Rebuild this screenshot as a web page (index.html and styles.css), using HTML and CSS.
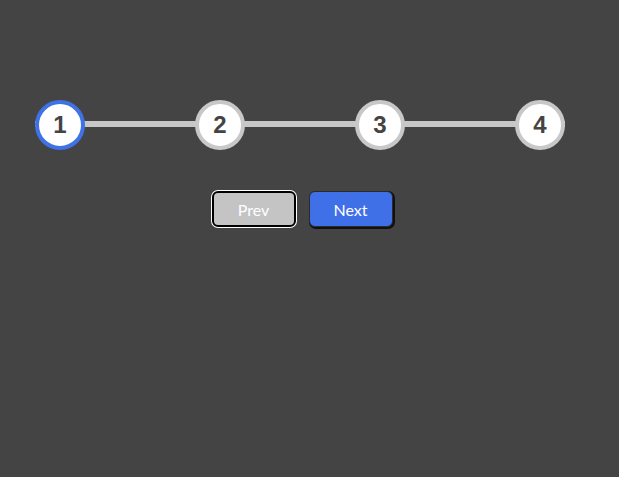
FILE: index.html
```html
<!DOCTYPE html>
<html lang="en">
<head>
  <meta charset="UTF-8">
  <title>Progress Steps</title>
  <link rel="stylesheet" href="styles.css">
</head>
<body>
  <div class="container">
    <div class="progress">
      <div class="circle active">1</div>
      <div class="circle">2</div>
      <div class="circle">3</div>
      <div class="circle">4</div>
    </div>
    <div class="buttons">
      <button class="btn btn-prev" disabled>Prev</button>
      <button class="btn btn-next">Next</button>
    </div>
  </div>
</body>
</html>
```

FILE: styles.css
```css
body {
  margin: 0;
  padding: 0;
  background-color: #444444;
  font-family: Lato, "Open Sans", sans-serif;
  min-height: 100vh;
}

.container {
  width: 530px;
  margin-left: 35px;
  padding-top: 100px;
}

.progress {
  position: relative;
  display: flex;
  justify-content: space-between;
}

.progress::before {
  content: "";
  position: absolute;
  left: 0;
  right: 0;
  top: 21px;
  height: 6px;
  background-color: #c8c8c8;
  z-index: 0;
}

.circle {
  position: relative;
  z-index: 1;
  width: 42px;
  height: 42px;
  border: 4px solid #c8c8c8;
  border-radius: 50%;
  background-color: #fff;
  color: #444;
  font-family: "Liberation Sans", Arial, sans-serif;
  font-weight: bold;
  font-size: 24px;
  display: flex;
  align-items: center;
  justify-content: center;
}

.circle.active {
  border-color: #3f72e6;
}

.buttons {
  display: flex;
  justify-content: center;
  gap: 13px;
  margin-top: 41px;
  padding-left: 4px;
}

.btn {
  width: 84px;
  height: 36px;
  border-radius: 6px;
  font-family: Lato, "Open Sans", sans-serif;
  font-size: 16px;
  color: #fff;
  cursor: pointer;
  padding: 0;
}

.btn-prev {
  background-color: #c4c4c4;
  border: 2px solid #000;
  box-shadow: 0 0 0 1px #fff;
}

.btn-next {
  background-color: #4070e8;
  border: 1px solid #2a2a2a;
  box-shadow: 1px 1px 0 1px #111;
}
```
